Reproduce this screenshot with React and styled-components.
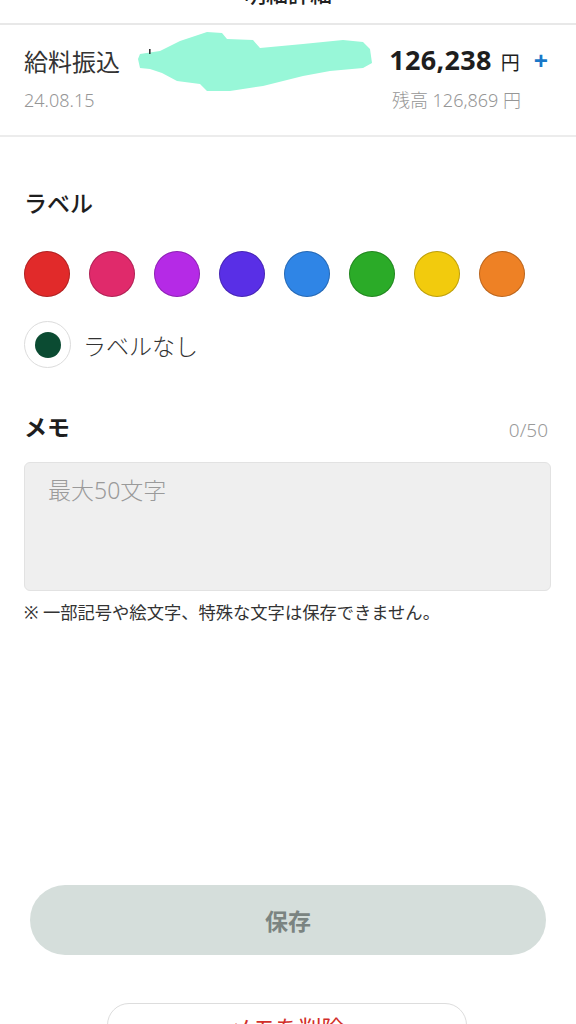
import React from 'react'
import styled, { createGlobalStyle } from 'styled-components'

const GlobalStyle = createGlobalStyle`
  body {
    margin: 0;
    background: #ffffff;
    font-family: "Noto Sans", "Noto Sans CJK JP", sans-serif;
    color: #333333;
  }
`

const LABEL_COLORS = [
  '#e12a2a',
  '#e02a6b',
  '#b52ae6',
  '#592fe6',
  '#2f85e6',
  '#2bab28',
  '#f2cb0d',
  '#ee8125',
]

const Redaction = () => (
  <Blob width="240" height="66" viewBox="136 28 240 66">
    <path
      d="M138 58 L140 53 L160 50 L180 40 L207 31 L222 32 L227 38 L253 39 L260 47 L303 43 L343 39 L363 41 L370 48 L372 62 L363 67 L330 70 L303 75 L263 85 L230 90 L207 90 L200 83 L177 80 L162 72 L150 68 L140 67 Z"
      fill="#98f7d8"
    />
    <rect x="149" y="48" width="1.6" height="5" fill="#333" />
  </Blob>
)

export default function App() {
  return (
    <Page>
      <GlobalStyle />
      <TopBar>
        <BackIcon viewBox="0 0 24 24">
          <path d="M15 4 L7 12 L15 20" fill="none" stroke="#444" strokeWidth="2" />
        </BackIcon>
        <Title>明細詳細</Title>
      </TopBar>

      <TxCard>
        <TxRow>
          <TxName>給料振込</TxName>
          <Amount>
            126,238<Yen>円</Yen>
            <Plus>+</Plus>
          </Amount>
        </TxRow>
        <TxRow>
          <SubText>24.08.15</SubText>
          <Balance>残高 126,869 円</Balance>
        </TxRow>
        <Redaction />
      </TxCard>

      <Body>
        <SectionTitle>ラベル</SectionTitle>
        <ColorRow>
          {LABEL_COLORS.map((c) => (
            <Swatch key={c} $color={c} />
          ))}
        </ColorRow>
        <NoneRow>
          <NoneRing>
            <NoneDot />
          </NoneRing>
          <NoneText>ラベルなし</NoneText>
        </NoneRow>

        <MemoHead>
          <SectionTitle $bold>メモ</SectionTitle>
          <Counter>0/50</Counter>
        </MemoHead>
        <MemoBox placeholder="最大50文字" />
        <Note>※ 一部記号や絵文字、特殊な文字は保存できません。</Note>

        <SaveButton>保存</SaveButton>
        <DeleteButton>メモを削除</DeleteButton>
      </Body>
    </Page>
  )
}

const Page = styled.div`
  width: 576px;
  height: 1024px;
  overflow: hidden;
  display: flex;
  flex-direction: column;
`

const TopBar = styled.header`
  height: 23px;
  flex-shrink: 0;
  display: flex;
  align-items: flex-end;
  justify-content: center;
  position: relative;
  overflow: hidden;
  border-bottom: 2px solid #e8e8e8;
`

const BackIcon = styled.svg`
  position: absolute;
  left: 14px;
  bottom: 20px;
  width: 24px;
  height: 24px;
`

const Title = styled.h1`
  margin: 0 0 20px;
  font-size: 22px;
  line-height: 20px;
  font-weight: 500;
  color: #222;
`

const TxCard = styled.section`
  position: relative;
  padding: 19px 25px 23px 24px;
  display: flex;
  flex-direction: column;
  gap: 9px;
  border-bottom: 2px solid #ececec;
`

const TxRow = styled.div`
  display: flex;
  align-items: center;
  justify-content: space-between;
`

const TxName = styled.span`
  font-size: 24px;
  line-height: 32px;
  color: #333;
`

const Amount = styled.span`
  display: flex;
  align-items: baseline;
  font-size: 27px;
  line-height: 32px;
  font-weight: 700;
  letter-spacing: 0.3px;
  color: #1e1e1e;
`

const Yen = styled.span`
  font-size: 19px;
  font-weight: 400;
  margin-left: 9px;
  letter-spacing: 0;
`

const Plus = styled.span`
  font-size: 25px;
  color: #1a78c8;
  margin: 0 3px 0 14px;
  letter-spacing: 0;
`

const SubText = styled.span`
  font-size: 18px;
  line-height: 24px;
  font-weight: 300;
  color: #969696;
`

const Balance = styled(SubText)`
  margin-right: 30px;
`

const Blob = styled.svg`
  position: absolute;
  left: 136px;
  top: 4px;
`

const Body = styled.main`
  display: flex;
  flex-direction: column;
  padding: 0 25px 0 24px;
`

const SectionTitle = styled.h2`
  margin: 0;
  font-size: 23px;
  line-height: 32px;
  font-weight: ${(p) => (p.$bold ? 700 : 500)};
  color: #1e1e1e;
  &:first-child {
    margin-top: 50px;
  }
`

const ColorRow = styled.div`
  display: flex;
  gap: 19px;
  margin-top: 32px;
`

const Swatch = styled.span`
  width: 46px;
  height: 46px;
  border-radius: 50%;
  background: ${(p) => p.$color};
  box-shadow: inset 0 0 0 1px rgba(0, 0, 0, 0.22);
`

const NoneRow = styled.div`
  display: flex;
  align-items: center;
  gap: 12px;
  margin-top: 24px;
`

const NoneRing = styled.span`
  width: 45px;
  height: 45px;
  border-radius: 50%;
  border: 1px solid #dcdcdc;
  display: flex;
  align-items: center;
  justify-content: center;
`

const NoneDot = styled.span`
  width: 26px;
  height: 26px;
  border-radius: 50%;
  background: #0b4b32;
`

const NoneText = styled.span`
  font-size: 23px;
  font-weight: 300;
  color: #333;
`

const MemoHead = styled.div`
  display: flex;
  justify-content: space-between;
  align-items: flex-end;
  margin-top: 43px;
  ${SectionTitle} {
    margin-top: 0;
  }
`

const Counter = styled.span`
  font-size: 19px;
  line-height: 26px;
  font-weight: 300;
  color: #9a9a9a;
  margin-right: 3px;
`

const MemoBox = styled.textarea`
  margin-top: 19px;
  height: 129px;
  box-sizing: border-box;
  resize: none;
  background: #efefef;
  border: 1px solid #e2e2e2;
  border-radius: 6px;
  padding: 11px 23px;
  font-family: inherit;
  font-size: 23px;
  font-weight: 300;
  line-height: 32px;
  &::placeholder {
    color: #9a9a9a;
  }
`

const Note = styled.p`
  margin: 10px 0 0;
  font-size: 17.3px;
  line-height: 24px;
  color: #333;
`

const SaveButton = styled.button`
  margin: 260px 5px 0 6px;
  height: 70px;
  border: none;
  border-radius: 35px;
  background: #d5dedb;
  color: #7b8481;
  font-family: inherit;
  font-size: 23px;
  font-weight: 700;
`

const DeleteButton = styled.button`
  align-self: center;
  margin: 48px 0 0 -1px;
  width: 360px;
  height: 60px;
  background: #fff;
  border: 1px solid #dddddd;
  border-radius: 22px;
  color: #d22f2a;
  font-family: inherit;
  font-size: 23px;
  line-height: 28px;
  display: flex;
  justify-content: center;
  align-items: flex-start;
  padding-top: 10px;
`
